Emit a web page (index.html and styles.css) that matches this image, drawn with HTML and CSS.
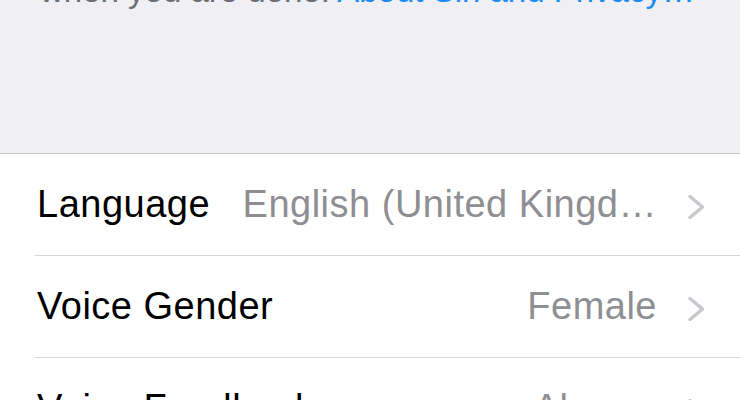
FILE: index.html
```html
<!DOCTYPE html>
<html>
<head>
<meta charset="utf-8">
<link rel="stylesheet" href="styles.css">
</head>
<body>
<div class="page">
  <p class="footnote">when you are done. <span class="link">About Siri and Privacy…</span></p>
  <div class="list">
    <div class="row">
      <div class="row-inner">
        <span class="label">Language</span>
        <span class="value">English (United Kingd…</span>
        <svg class="chev" width="18" height="24" viewBox="0 0 18 24"><polyline points="3,1.5 15.5,12 3,22.5" fill="none" stroke="#c7c7cc" stroke-width="3.4" stroke-linecap="round" stroke-linejoin="round"/></svg>
      </div>
    </div>
    <div class="row">
      <div class="row-inner">
        <span class="label">Voice Gender</span>
        <span class="value">Female</span>
        <svg class="chev" width="18" height="24" viewBox="0 0 18 24"><polyline points="3,1.5 15.5,12 3,22.5" fill="none" stroke="#c7c7cc" stroke-width="3.4" stroke-linecap="round" stroke-linejoin="round"/></svg>
      </div>
    </div>
    <div class="row">
      <div class="row-inner">
        <span class="label">Voice Feedback</span>
        <span class="value">Always</span>
        <svg class="chev" width="18" height="24" viewBox="0 0 18 24"><polyline points="3,1.5 15.5,12 3,22.5" fill="none" stroke="#c7c7cc" stroke-width="3.4" stroke-linecap="round" stroke-linejoin="round"/></svg>
      </div>
    </div>
  </div>
</div>
</body>
</html>
```
FILE: styles.css
```css
html, body {
  margin: 0;
  padding: 0;
}
.page {
  width: 740px;
  height: 400px;
  overflow: hidden;
  background: #efeff4;
  font-family: "Liberation Sans", Arial, sans-serif;
}
.footnote {
  margin: -28px 0 0 0;
  padding: 0 40px;
  height: 181px;
  font-size: 33px;
  line-height: 38px;
  color: #6d6d72;
  white-space: nowrap;
}
.link {
  color: #1a8cf0;
}
.list {
  background: #ffffff;
  border-top: 1px solid #c8c7cc;
}
.row {
  padding-left: 35px;
}
.row-inner {
  height: 101px;
  border-bottom: 1px solid #d8d8dc;
  display: flex;
  align-items: center;
  padding-left: 2px;
  padding-right: 35px;
  font-size: 38px;
  letter-spacing: 0.5px;
}
.label {
  color: #000000;
  white-space: nowrap;
}
.value {
  flex: 1;
  text-align: right;
  color: #8e8e93;
  white-space: nowrap;
  margin-left: 31px;
}
.chev {
  margin-left: 30px;
  margin-top: 4px;
  flex: none;
}
```
